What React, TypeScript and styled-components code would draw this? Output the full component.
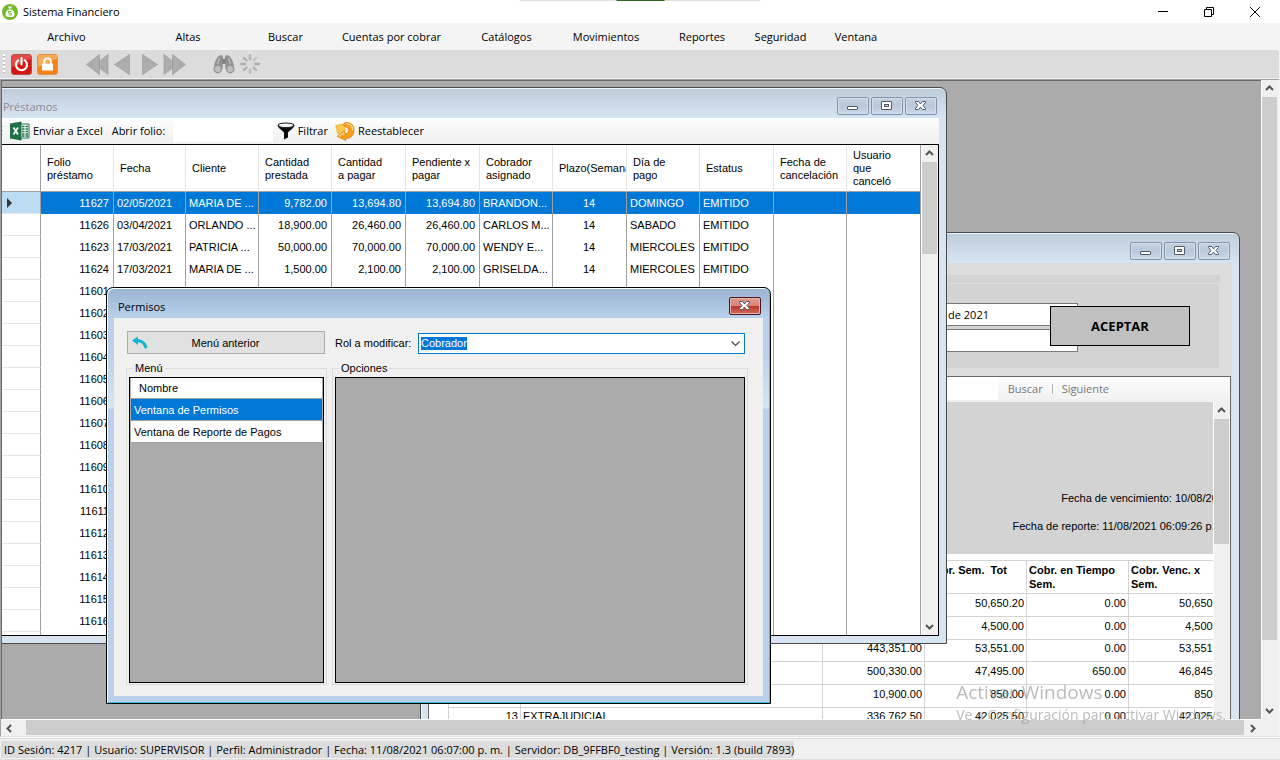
import React, { useEffect, useRef } from "react";
import styled, { createGlobalStyle, css } from "styled-components";

const uiFont = '"Open Sans", "Noto Sans", sans-serif';
const gridFont = '"Liberation Sans", Arial, sans-serif';

const GlobalStyle = createGlobalStyle`
  * { box-sizing: border-box; }
  html, body { margin: 0; padding: 0; }
  body { font: 11px/16px ${uiFont}; color: #000; background: #f0f0f0; }
  button, input { font: inherit; color: inherit; margin: 0; padding: 0; border: 0; background: none; border-radius: 0; outline: none; }
`;

/* ---------- Application frame ---------- */

const Shell = styled.div`
  display: flex;
  flex-direction: column;
  height: 100vh;
  overflow: hidden;
`;

const TitleBar = styled.header`
  position: relative;
  display: flex;
  align-items: center;
  height: 23px;
  flex: none;
  padding: 0 2px;
  background: #fff;
`;

const TopHandle = styled.div`
  position: absolute;
  top: 0;
  left: 50%;
  width: 241px;
  height: 1px;
  transform: translateX(-50%);
  display: flex;
  justify-content: center;
  background: #e1e1e1;
  &::after {
    content: "";
    width: 48px;
    background: #2d6a1e;
  }
`;

const AppTitle = styled.h1`
  flex: 1;
  margin: 0 0 0 5px;
  font-size: 11px;
  font-weight: 400;
`;

const CaptionButton = styled.button`
  width: 46px;
  height: 23px;
  display: flex;
  align-items: center;
  justify-content: center;
`;

const MenuBar = styled.nav`
  display: flex;
  flex: none;
  height: 27px;
  background: #f4f4f4;
`;

const MenuItem = styled.button<{ $w: number }>`
  width: ${(p) => p.$w}px;
  text-align: center;
  white-space: nowrap;
`;

const MainToolbar = styled.div`
  display: flex;
  flex: none;
  align-items: center;
  height: 29px;
  padding-left: 3px;
  background: #dcdcdc;
  border-bottom: 1px solid #f0f0f0;
  border-right: 1px solid #f4f4f4;
  border-radius: 0 3px 0 0;
`;

const Grip = styled.span<{ $h: number }>`
  width: 2px;
  height: ${(p) => p.$h}px;
  flex: none;
  background: repeating-linear-gradient(#fff 0 2px, #bdbdbd 2px 3px, transparent 3px 4px);
`;

const IconButton = styled.button<{ $gap: number }>`
  display: flex;
  flex: none;
  margin-left: ${(p) => p.$gap}px;
`;

const Mdi = styled.main`
  flex: 1;
  min-height: 0;
  display: grid;
  grid-template: minmax(0, 1fr) 17px / minmax(0, 1fr) 17px;
  border-style: solid;
  border-width: 1px 2px 1px 1px;
  border-color: #a0a0a0 #f4f4f4 #e3e3e3 #a0a0a0;
  background: #f0f0f0;
`;

const Desktop = styled.div`
  position: relative;
  overflow: hidden;
  background: #ababab;
  border-top: 1px solid #696969;
  border-left: 1px solid #696969;
`;

const StatusBar = styled.footer`
  flex: none;
  display: flex;
  height: 23px;
  padding: 3px 1px 1px;
  background: #f0f0f0;
  border-top: 1px solid #fff;
  border-bottom: 1px solid #dcdcdc;
  box-shadow: inset 0 1px #d9d9d9;
`;

const StatusText = styled.span`
  padding: 0 0 0 3px;
  line-height: 17px;
  white-space: nowrap;
  background: #dcdcdc;
`;

const Watermark = styled.div`
  position: fixed;
  right: 54px;
  bottom: 35px;
  pointer-events: none;
  color: rgba(150, 150, 150, 0.65);
  font-size: 14px;
  line-height: 20px;
  white-space: nowrap;
  strong {
    display: block;
    font-weight: 400;
    font-size: 19px;
    line-height: 26px;
  }
`;

/* ---------- Scroll bars ---------- */

const Bar = styled.div<{ $row?: boolean }>`
  display: flex;
  flex: none;
  background: #f0f0f0;
  ${(p) =>
    p.$row
      ? css`
          height: 17px;
          border-top: 1px solid #fff;
          border-bottom: 1px solid #f0f0f0;
        `
      : css`
          flex-direction: column;
          width: 17px;
          border-left: 1px solid #fff;
          border-right: 1px solid #f0f0f0;
        `}
`;

const BarArrow = styled.button`
  flex: none;
  width: 17px;
  height: 17px;
  display: flex;
  align-items: center;
  justify-content: center;
  ${Bar} > & {
    max-width: 100%;
  }
`;

const BarThumb = styled.div<{ $flex: string }>`
  flex: ${(p) => p.$flex};
  background: #cdcdcd;
`;

const BarSpace = styled.div<{ $flex: string }>`
  flex: ${(p) => p.$flex};
`;

const arrowPaths = {
  up: "M1 6l3.5-3.5L8 6",
  down: "M1 3l3.5 3.5L8 3",
  left: "M6 1L2.500 4.500 6 8",
  right: "M3 1l3.500 3.500L3 8",
};

function Arrow({ dir }: { dir: keyof typeof arrowPaths }) {
  return (
    <svg width="9" height="9" viewBox="0 0 9 9">
      <path d={arrowPaths[dir]} fill="none" stroke="#555" strokeWidth="2" />
    </svg>
  );
}

interface ScrollProps {
  row?: boolean;
  lead?: string;
  thumb: string;
  tail?: string;
}

function Scroll({ row, lead, thumb, tail }: ScrollProps) {
  return (
    <Bar $row={row}>
      <BarArrow type="button" aria-label="Retroceder"><Arrow dir={row ? "left" : "up"} /></BarArrow>
      {lead && <BarSpace $flex={lead} />}
      <BarThumb $flex={thumb} />
      {tail && <BarSpace $flex={tail} />}
      <BarArrow type="button" aria-label="Avanzar"><Arrow dir={row ? "right" : "down"} /></BarArrow>
    </Bar>
  );
}

/* ---------- Child windows ---------- */

const Window = styled.section<{ $x: number; $y: number; $w: number; $h: number; $active?: boolean }>`
  position: absolute;
  left: ${(p) => p.$x}px;
  top: ${(p) => p.$y}px;
  width: ${(p) => p.$w}px;
  height: ${(p) => p.$h}px;
  display: flex;
  flex-direction: column;
  padding: 0 7px 7px;
  border: 1px solid #4a4a4a;
  border-radius: 7px 7px 0 0;
  background: linear-gradient(#bfcddb, #d7e4f2 30px);
  box-shadow: inset 1px 1px #eef4fa;
  ${(p) =>
    p.$active &&
    css`
      border-color: #000;
      background: linear-gradient(#99b4d1, #b9d1ea 30px, #b9d1ea 66px, #d3e6f5 120px, #b9d1ea 121px);
      box-shadow: inset 1px 1px #fff, inset -1px -1px #35c5e0;
    `}
`;

const Caption = styled.div`
  display: flex;
  flex: none;
  gap: 3px;
  height: 30px;
  padding: 9px 2px 0 2px;
`;

const CaptionText = styled.h2<{ $active?: boolean }>`
  flex: 1;
  margin: 0;
  padding-left: ${(p) => (p.$active ? 2 : 0)}px;
  font-size: 11px;
  line-height: 20px;
  font-weight: 400;
  color: ${(p) => (p.$active ? "#000" : "#8b8d96")};
`;

const ChildButton = styled.button<{ $danger?: boolean }>`
  display: flex;
  align-items: center;
  justify-content: center;
  width: 32px;
  height: 18px;
  border: 1px solid #8493ac;
  border-radius: 2px;
  background: linear-gradient(#c3d0de, #b9c9da 50%, #cbd9e8);
  box-shadow: inset 0 0 0 1px #d3dfeb;
  ${(p) =>
    p.$danger &&
    css`
      border-color: #4a1420;
      background: linear-gradient(#e09a92, #d98378 48%, #b8382a 50%, #cf6a5a);
      box-shadow: inset 0 0 0 1px #eab4ac;
    `}
`;

const ChildButtonGroup = styled.div`
  display: flex;
  gap: 2px;
`;

const WindowBody = styled.div`
  flex: 1;
  min-height: 0;
  display: flex;
  flex-direction: column;
`;

function MinGlyph() {
  return (
    <svg width="12" height="12" viewBox="0 0 12 12">
      <rect x=".5" y="6.500" width="10" height="3" rx=".5" fill="#fff" stroke="#535666" />
    </svg>
  );
}

function MaxGlyph() {
  return (
    <svg width="12" height="10" viewBox="0 0 12 10">
      <rect x=".5" y=".5" width="10" height="8" rx=".5" fill="#fff" stroke="#535666" />
      <rect x="3.500" y="3.500" width="4" height="2" fill="#c3d0de" stroke="#535666" />
    </svg>
  );
}

function CloseGlyph() {
  return (
    <svg width="12" height="10" viewBox="0 0 12 10">
      <path d="M.5.5h3L5.500 3 7.500.5h3v1L8 4.500l2.500 3v1h-3l-2-2.500-2 2.500h-3v-1L3 4.500.5 1.500z" fill="#fff" stroke="#535666" />
    </svg>
  );
}

function ChildButtons() {
  return (
    <ChildButtonGroup>
      <ChildButton type="button" aria-label="Minimizar"><MinGlyph /></ChildButton>
      <ChildButton type="button" aria-label="Maximizar"><MaxGlyph /></ChildButton>
      <ChildButton type="button" aria-label="Cerrar"><CloseGlyph /></ChildButton>
    </ChildButtonGroup>
  );
}

/* ---------- Loans window ---------- */

const Strip = styled.div`
  display: flex;
  flex: none;
  align-items: center;
  height: 26px;
  background: linear-gradient(#fdfdfd, #f0f0f0);
`;

const StripButton = styled.button<{ $gap: number }>`
  display: flex;
  align-items: center;
  gap: 3px;
  margin-left: ${(p) => p.$gap}px;
  white-space: nowrap;
`;

const StripLabel = styled.label`
  width: 61px;
  margin-left: 9px;
  white-space: nowrap;
`;

const FolioInput = styled.input`
  width: 100px;
  height: 22px;
  background: #fff;
`;

const GridFrame = styled.div`
  flex: 1;
  min-height: 0;
  display: flex;
  border: 1px solid #000;
  background: #fff;
  overflow: hidden;
`;

const GridView = styled.div`
  flex: 1;
  min-width: 0;
  overflow: hidden;
`;

const LoanTable = styled.table`
  width: 919px;
  table-layout: fixed;
  border-collapse: separate;
  border-spacing: 0;
  font: 11px/13px ${gridFont};
  th,
  td {
    padding: 1px 4px 0 3px;
    overflow: hidden;
    white-space: nowrap;
    font-weight: 400;
    text-align: left;
    border-right: 1px solid #a0a0a0;
  }
  thead th {
    height: 47px;
    padding: 1px 0 0 6px;
    border-right-color: #e5e5e5;
    border-bottom: 1px solid #a0a0a0;
    &:first-child,
    &:last-child {
      border-right-color: #a0a0a0;
    }
  }
  tbody td,
  tbody th {
    height: 22px;
  }
  tbody th {
    border-bottom: 1px solid #e5e5e5;
    padding-left: 5px;
    svg {
      display: block;
    }
  }
`;

const LoanRow = styled.tr<{ $selected?: boolean }>`
  ${(p) =>
    p.$selected &&
    css`
      td {
        background: #0078d7;
        color: #fff;
      }
      th {
        background: #bcdcf4;
      }
    `}
`;

const Cell = styled.td<{ $align?: string }>`
  && {
    text-align: ${(p) => p.$align ?? "left"};
  }
`;

const loanColumns: { w: number; lines: string[]; align?: string }[] = [
  { w: 73, lines: ["Folio", "préstamo"], align: "right" },
  { w: 72, lines: ["Fecha"] },
  { w: 73, lines: ["Cliente"] },
  { w: 73, lines: ["Cantidad", "prestada"], align: "right" },
  { w: 74, lines: ["Cantidad", "a pagar"], align: "right" },
  { w: 74, lines: ["Pendiente x", "pagar"], align: "right" },
  { w: 73, lines: ["Cobrador", "asignado"] },
  { w: 74, lines: ["Plazo(Semanas)"], align: "center" },
  { w: 73, lines: ["Día de", "pago"] },
  { w: 74, lines: ["Estatus"] },
  { w: 73, lines: ["Fecha de", "cancelación"] },
  { w: 74, lines: ["Usuario", "que", "canceló"] },
];

const loans: string[][] = [
  ["11627", "02/05/2021", "MARIA DE ...", "9,782.00", "13,694.80", "13,694.80", "BRANDON...", "14", "DOMINGO", "EMITIDO"],
  ["11626", "03/04/2021", "ORLANDO ...", "18,900.00", "26,460.00", "26,460.00", "CARLOS M...", "14", "SABADO", "EMITIDO"],
  ["11623", "17/03/2021", "PATRICIA ...", "50,000.00", "70,000.00", "70,000.00", "WENDY E...", "14", "MIERCOLES", "EMITIDO"],
  ["11624", "17/03/2021", "MARIA DE ...", "1,500.00", "2,100.00", "2,100.00", "GRISELDA...", "14", "MIERCOLES", "EMITIDO"],
  ...Array.from({ length: 17 }, (_, i) => [String(11601 + i)]),
];

function ExcelIcon() {
  return (
    <svg width="20" height="20" viewBox="0 0 20 20">
      <path d="M10 3h9v14h-9z" fill="#fff" stroke="#1f7246" />
      <path d="M12 5.500h2.500M12 8h2.500M12 10.500h2.500M12 13h2.500M15.500 5.500H18M15.500 8H18M15.500 10.500H18M15.500 13H18M12 15h2.500M15.500 15H18" stroke="#1f7246" strokeWidth="1.500" />
      <path d="M0 2.500L11.500.5v19L0 17.500z" fill="#1f7246" />
      <path d="M3.500 6.500l4.500 7M8 6.500l-4.500 7" stroke="#fff" strokeWidth="1.700" />
    </svg>
  );
}

function FunnelIcon() {
  return (
    <svg width="18" height="18" viewBox="0 0 18 18">
      <path d="M.5 3C1 7 6.500 8.500 7 11v6.500l4-2V11c.5-2.500 6-4 6.500-8z" fill="#0c0c0c" />
      <ellipse cx="9" cy="3.300" rx="7.700" ry="2.300" fill="#f5f5f5" stroke="#222" strokeWidth="1.100" />
    </svg>
  );
}

function RefreshIcon() {
  return (
    <svg width="20" height="20" viewBox="0 0 20 20">
      <path d="M.8 4.500L8.500 3l2 6.500L8 13l-5.500-.5z" fill="#fbc94e" stroke="#e9a52e" strokeWidth=".7" />
      <path d="M10 1.300l5.500.9C18.300 4 19.500 7 19 10.500c-.5 4.500-4 7.300-8.500 7.200l.3 1.800L2 15.300 9.300 10l.3 2.600c2.400.2 4-1 4-3.300 0-2-1.400-3-3.200-3.300L8.500 3.500z" fill="#f79f1c" stroke="#dd860e" strokeWidth=".8" />
      <path d="M11 2.700l4 .9c2 1.400 2.900 3.500 2.600 6.200M4 15.200l4.500-3.200.3 2.300" fill="none" stroke="#fdd583" strokeWidth="1.300" />
    </svg>
  );
}

function LoansWindow() {
  return (
    <Window $x={-9} $y={6} $w={954} $h={557}>
      <Caption>
        <CaptionText>Préstamos</CaptionText>
        <ChildButtons />
      </Caption>
      <WindowBody>
        <Strip>
          <Grip $h={14} />
          <StripButton type="button" $gap={7}><ExcelIcon />Enviar a Excel</StripButton>
          <StripLabel htmlFor="folio">Abrir folio:</StripLabel>
          <FolioInput id="folio" />
          <StripButton type="button" $gap={4}><FunnelIcon />Filtrar</StripButton>
          <StripButton type="button" $gap={7}><RefreshIcon />Reestablecer</StripButton>
        </Strip>
        <GridFrame>
          <GridView>
            <LoanTable>
              <colgroup>
                <col width={39} />
                {loanColumns.map((c) => <col key={c.lines.join()} width={c.w} />)}
              </colgroup>
              <thead>
                <tr>
                  <th />
                  {loanColumns.map((c) => (
                    <th key={c.lines.join()} scope="col">
                      {c.lines.map((line, i) => (
                        <React.Fragment key={line}>{i > 0 && <br />}{line}</React.Fragment>
                      ))}
                    </th>
                  ))}
                </tr>
              </thead>
              <tbody>
                {loans.map((row, r) => (
                  <LoanRow key={row[0]} $selected={r === 0}>
                    <th>
                      {r === 0 && (
                        <svg width="6" height="10" viewBox="0 0 6 10"><path d="M0 0l5 5-5 5z" fill="#333" /></svg>
                      )}
                    </th>
                    {loanColumns.map((c, i) => (
                      <Cell key={c.lines.join()} $align={c.align}>{row[i]}</Cell>
                    ))}
                  </LoanRow>
                ))}
              </tbody>
            </LoanTable>
          </GridView>
          <Scroll thumb="92" tail="364" />
        </GridFrame>
      </WindowBody>
    </Window>
  );
}

/* ---------- Report window ---------- */

const ReportBody = styled(WindowBody)`
  background: #dcdcdc;
`;

const FilterArea = styled.div`
  flex: none;
  height: 113px;
  padding: 12px 12px 7px;
`;

const FilterGroup = styled.div`
  height: 94px;
  padding-top: 8px;
  background: #d3d3d3;
`;

const FilterFrame = styled.div`
  position: relative;
  height: 86px;
  display: flex;
  flex-direction: column;
  align-items: flex-end;
  gap: 3px;
  padding: 19px 141px 0 0;
  border: 1px solid #dedede;
`;

const FilterInput = styled.input`
  width: 300px;
  height: 23px;
  padding-right: 88px;
  text-align: right;
  background: #fff;
  border: 1px solid #7a7a7a;
`;

const AcceptButton = styled.button`
  position: absolute;
  top: 22px;
  right: 29px;
  width: 140px;
  height: 40px;
  border: 1px solid #000;
  background: #c0c0c0;
  font-size: 13px;
  font-weight: 700;
`;

const Viewer = styled.div`
  flex: 1;
  min-height: 0;
  display: flex;
  flex-direction: column;
  margin-right: 1px;
  border: 1px solid #696969;
  background: #fff;
`;

const ViewerStrip = styled.div`
  display: flex;
  flex: none;
  align-items: center;
  justify-content: flex-end;
  height: 25px;
  padding: 0 121px 2px 0;
  color: #777;
  background: linear-gradient(#fdfdfd, #f0f0f0);
`;

const SearchInput = styled.input`
  width: 160px;
  height: 23px;
  margin-right: 10px;
  background: #fff;
`;

const ViewerButton = styled.button`
  font-size: 11px;
  &:last-child {
    margin-left: 9px;
    padding-left: 10px;
    background: linear-gradient(#b5b5b5, #b5b5b5) 0 50% / 1px 10px no-repeat;
  }
`;

const ViewerPane = styled.div`
  flex: 1;
  min-height: 0;
  display: flex;
`;

const Page = styled.div`
  flex: 1;
  min-width: 0;
  overflow: hidden;
  font: 11px/14px ${gridFont};
`;

const PageHead = styled.div`
  width: 802px;
  height: 152px;
  padding: 89px 1px 0 0;
  text-align: right;
  background: #d3d3d3;
  p {
    margin: 0 0 14px;
  }
`;

const ReportTable = styled.table`
  width: 783px;
  margin: 6px 0 0 19px;
  table-layout: fixed;
  border-collapse: collapse;
  th,
  td {
    height: 23px;
    padding: 2px 2px 0;
    border: 1px solid #d3d3d3;
    vertical-align: top;
    text-align: right;
    white-space: pre;
  }
  th {
    height: 33px;
    text-align: left;
  }
  tbody tr:nth-child(3n) td {
    height: 22px;
    padding-top: 1px;
  }
  td:nth-child(2) {
    text-align: left;
  }
`;

const reportRows: string[][] = [
  ["8", "", "", "50,650.20", "0.00", "50,650.20"],
  ["9", "", "", "4,500.00", "0.00", "4,500.00"],
  ["10", "", "443,351.00", "53,551.00", "0.00", "53,551.00"],
  ["11", "", "500,330.00", "47,495.00", "650.00", "46,845.00"],
  ["12", "", "10,900.00", "850.00", "0.00", "850.00"],
  ["13", "EXTRAJUDICIAL", "336,762.50", "42,025.50", "0.00", "42,025.50"],
];

function ReportWindow() {
  return (
    <Window $x={418} $y={151} $w={820} $h={600}>
      <Caption>
        <CaptionText />
        <ChildButtons />
      </Caption>
      <ReportBody>
        <FilterArea>
          <FilterGroup>
            <FilterFrame>
              <FilterInput aria-label="Fecha" defaultValue="martes, 10 de agosto de 2021" />
              <FilterInput aria-label="Cobrador" />
              <AcceptButton type="button">ACEPTAR</AcceptButton>
            </FilterFrame>
          </FilterGroup>
        </FilterArea>
        <Viewer>
          <ViewerStrip>
            <SearchInput aria-label="Texto" />
            <ViewerButton type="button">Buscar</ViewerButton>
            <ViewerButton type="button">Siguiente</ViewerButton>
          </ViewerStrip>
          <ViewerPane>
            <Page>
              <PageHead>
                <p>Fecha de vencimiento: 10/08/2021</p>
                <p>Fecha de reporte: 11/08/2021 06:09:26 p. m.</p>
              </PageHead>
              <ReportTable>
                <colgroup>
                  <col width={72} />
                  <col width={302} />
                  <col width={102} />
                  <col width={102} />
                  <col width={102} />
                  <col width={102} />
                </colgroup>
                <thead>
                  <tr>
                    <th /><th /><th />
                    <th scope="col">{"Cobr. Sem.  Tot"}</th>
                    <th scope="col">Cobr. en Tiempo<br />Sem.</th>
                    <th scope="col">Cobr. Venc. x<br />Sem.</th>
                  </tr>
                </thead>
                <tbody>
                  {reportRows.map((row) => (
                    <tr key={row[0]}>{row.map((v, i) => <td key={i}>{v}</td>)}</tr>
                  ))}
                </tbody>
              </ReportTable>
            </Page>
            <Scroll thumb="0 0 125px" tail="1" />
          </ViewerPane>
        </Viewer>
      </ReportBody>
    </Window>
  );
}

/* ---------- Permissions dialog ---------- */

const DialogBody = styled(WindowBody)`
  padding: 13px 15px 11px 12px;
  gap: 7px;
  background: #f0f0f0;
  font: 11px/13px ${gridFont};
`;

const DialogRow = styled.div`
  display: flex;
  align-items: flex-end;
  height: 23px;
  padding: 0 3px 0 1px;
`;

const BackButton = styled.button`
  display: flex;
  align-items: center;
  width: 198px;
  height: 23px;
  padding: 0 4px;
  border: 1px solid #adadad;
  background: #e1e1e1;
  span {
    flex: 1;
    padding: 1px 17px 0 0;
    text-align: center;
  }
`;

const RoleLabel = styled.label`
  width: 83px;
  margin-left: 10px;
  padding-top: 1px;
  line-height: 22px;
  white-space: nowrap;
`;

const Combo = styled.div`
  flex: 1;
  display: flex;
  align-items: center;
  height: 21px;
  padding: 0 4px 0 2px;
  border: 1px solid #0078d7;
  background: #fff;
`;

const ComboInput = styled.input`
  flex: 1;
  min-width: 0;
  &::selection {
    color: #fff;
    background: #0078d7;
  }
`;

const Groups = styled.div`
  flex: 1;
  min-height: 0;
  display: flex;
  gap: 5px;
`;

const Group = styled.fieldset<{ $w?: number }>`
  ${(p) => (p.$w ? `flex: none; width: ${p.$w}px;` : "flex: 1; min-width: 0;")}
  display: flex;
  margin: 0;
  padding: 2px 2px 1px;
  border: 1px solid #dcdcdc;
  legend {
    margin-left: 4px;
    padding: 1px 2px 0;
  }
`;

const ListFrame = styled.div`
  flex: 1;
  min-width: 0;
  padding: 0 1px;
  border: 1px solid #000;
  background: #ababab;
`;

const MenuTable = styled.table`
  width: 100%;
  border-spacing: 0;
  th,
  td {
    height: 22px;
    padding: 1px 3px 0;
    font-weight: 400;
    text-align: left;
    background: #fff;
    border-bottom: 1px solid #a0a0a0;
  }
  th {
    height: 21px;
    padding-left: 8px;
  }
`;

const MenuRow = styled.tr<{ $selected?: boolean }>`
  ${(p) => p.$selected && "&& td { background: #0078d7; color: #fff; }"}
`;

function PermissionsDialog() {
  const role = useRef<HTMLInputElement>(null);

  useEffect(() => {
    role.current?.focus();
    role.current?.select();
  }, []);

  return (
    <Window $x={104} $y={206} $w={665} $h={417} $active>
      <Caption>
        <CaptionText $active>Permisos</CaptionText>
        <ChildButton type="button" aria-label="Cerrar" $danger><CloseGlyph /></ChildButton>
      </Caption>
      <DialogBody>
        <DialogRow>
          <BackButton type="button">
            <svg width="16" height="14" viewBox="0 0 16 14">
              <path d="M0 4.500L6 .5V3c5 .5 8.500 4 9.500 8.500L13 13C11.500 8.500 9.500 6.500 6 6.200V9z" fill="#16b4d0" />
            </svg>
            <span>Menú anterior</span>
          </BackButton>
          <RoleLabel htmlFor="rol">Rol a modificar:</RoleLabel>
          <Combo>
            <ComboInput id="rol" role="combobox" aria-expanded={false} ref={role} defaultValue="Cobrador" />
            <button type="button" aria-label="Desplegar">
              <svg width="9" height="6" viewBox="0 0 9 6"><path d="M.5.5l4 4 4-4" fill="none" stroke="#444" strokeWidth="1.200" /></svg>
            </button>
          </Combo>
        </DialogRow>
        <Groups>
          <Group $w={201}>
            <legend>Menú</legend>
            <ListFrame>
              <MenuTable>
                <thead><tr><th scope="col">Nombre</th></tr></thead>
                <tbody>
                  <MenuRow $selected><td>Ventana de Permisos</td></MenuRow>
                  <MenuRow><td>Ventana de Reporte de Pagos</td></MenuRow>
                </tbody>
              </MenuTable>
            </ListFrame>
          </Group>
          <Group>
            <legend>Opciones</legend>
            <ListFrame />
          </Group>
        </Groups>
      </DialogBody>
    </Window>
  );
}

/* ---------- Frame icons ---------- */

function AppIcon() {
  return (
    <svg width="16" height="16" viewBox="0 0 16 16">
      <circle cx="8" cy="8" r="8" fill="#76b82a" />
      <path d="M6 2.500h4L9 5c2 1 3.500 3 3.500 5.500 0 1.500-1 2.500-2.500 2.500H6c-1.500 0-2.500-1-2.500-2.500C3.500 8 5 6 7 5z" fill="#fff" />
      <path d="M9.500 7.500h-3v1.700h3V11h-3M6 5h4" fill="none" stroke="#76b82a" strokeWidth=".9" />
    </svg>
  );
}

function PowerIcon() {
  return (
    <svg width="21" height="21" viewBox="0 0 21 21">
      <rect x=".5" y=".5" width="20" height="20" rx="2.500" fill="#d41513" stroke="#b5514c" />
      <path d="M1 1h19v4C13 6 9 11 1 13z" fill="#ee7a70" opacity=".55" />
      <path d="M7 6.500a5.500 5.500 0 1 0 7 0M10.500 4v6.500" fill="none" stroke="#fff" strokeWidth="2.200" strokeLinecap="round" />
    </svg>
  );
}

function LockIcon() {
  return (
    <svg width="21" height="21" viewBox="0 0 21 21">
      <rect x=".5" y=".5" width="20" height="20" rx="2.500" fill="#f6821a" stroke="#dd9350" />
      <path d="M1 1h19v4C13 6 9 11 1 13z" fill="#fcbb70" opacity=".7" />
      <rect x="5" y="9.500" width="11" height="7" rx="1" fill="#fff" />
      <path d="M7.200 10V7.500a3.300 3.300 0 0 1 6.600 0V10" fill="none" stroke="#fff" strokeWidth="2" />
    </svg>
  );
}

function NavIcon({ double, flip }: { double?: boolean; flip?: boolean }) {
  const w = double ? 23 : 17;
  return (
    <svg width={w} height="21" viewBox={`0 0 ${w} 21`}>
      <g transform={flip ? `translate(${w} 0) scale(-1 1)` : undefined} fill="#adadad" stroke="#9c9c9c" strokeWidth=".7">
        {double ? (
          <>
            <path d="M9 10.500L22 .5v20z" />
            <path d="M.5 10.500L13.500.5v20z" />
          </>
        ) : (
          <path d="M.5 10.500L15.500.5v20z" />
        )}
      </g>
    </svg>
  );
}

function BinocularsIcon() {
  return (
    <svg width="22" height="20" viewBox="0 0 22 20">
      <path d="M5.500 2L9 1l1.300 2.500L9.500 15 1 14C1 9 3 5 5.500 2zM16.500 2L13 1l-1.300 2.500.8 11.500 8.500-1c0-5-2-9-4.500-12z" fill="#909090" />
      <path d="M9 5h4v5H9z" fill="#828282" />
      <path d="M6.500 4L4.500 10M15.500 4l2 6" stroke="#b8b8b8" strokeWidth="1.400" />
      <circle cx="4.800" cy="15" r="3.700" fill="#bdbdbd" stroke="#939393" strokeWidth="1.200" />
      <circle cx="17.200" cy="15" r="3.700" fill="#bdbdbd" stroke="#939393" strokeWidth="1.200" />
    </svg>
  );
}

function SpinnerIcon() {
  return (
    <svg width="22" height="20" viewBox="0 0 22 20">
      <g strokeWidth="2.400" strokeLinecap="round" stroke="#b0b0b0">
        <path d="M11 1.500v4" stroke="#b4b4b4" />
        <path d="M17 4l-2.500 2.500" stroke="#c4c4c4" />
        <path d="M20 10h-4M17 16l-2.500-2.500M5 16l2.500-2.500M2 10h4M5 4l2.500 2.500" />
        <path d="M11 18.500v-3" stroke="#bbb" />
      </g>
    </svg>
  );
}

const menus: [string, number][] = [
  ["Archivo", 133],
  ["Altas", 110],
  ["Buscar", 85],
  ["Cuentas por cobrar", 127],
  ["Catálogos", 103],
  ["Movimientos", 96],
  ["Reportes", 96],
  ["Seguridad", 61],
  ["Ventana", 90],
];

export default function App() {
  return (
    <Shell>
      <GlobalStyle />
      <TitleBar>
        <TopHandle />
        <AppIcon />
        <AppTitle>Sistema Financiero</AppTitle>
        <CaptionButton type="button" aria-label="Minimizar">
          <svg width="10" height="10" viewBox="0 0 10 10"><path d="M0 4.500h10" stroke="#000" /></svg>
        </CaptionButton>
        <CaptionButton type="button" aria-label="Restaurar">
          <svg width="10" height="10" viewBox="0 0 10 10">
            <path d="M.5 2.500h7v7h-7zM2.500 2.500v-2h7v7h-2" fill="none" stroke="#000" />
          </svg>
        </CaptionButton>
        <CaptionButton type="button" aria-label="Cerrar">
          <svg width="10" height="10" viewBox="0 0 10 10"><path d="M0 0l10 10M10 0L0 10" stroke="#000" /></svg>
        </CaptionButton>
      </TitleBar>
      <MenuBar>
        {menus.map(([label, w]) => <MenuItem key={label} type="button" $w={w}>{label}</MenuItem>)}
      </MenuBar>
      <MainToolbar>
        <Grip $h={20} />
        <IconButton type="button" aria-label="Salir" $gap={6}><PowerIcon /></IconButton>
        <IconButton type="button" aria-label="Bloquear" $gap={5}><LockIcon /></IconButton>
        <IconButton type="button" aria-label="Primero" $gap={28}><NavIcon double /></IconButton>
        <IconButton type="button" aria-label="Anterior" $gap={5}><NavIcon /></IconButton>
        <IconButton type="button" aria-label="Siguiente" $gap={10}><NavIcon flip /></IconButton>
        <IconButton type="button" aria-label="Último" $gap={5}><NavIcon double flip /></IconButton>
        <IconButton type="button" aria-label="Buscar" $gap={27}><BinocularsIcon /></IconButton>
        <IconButton type="button" aria-label="Actualizar" $gap={4}><SpinnerIcon /></IconButton>
      </MainToolbar>
      <Mdi>
        <Desktop>
          <ReportWindow />
          <LoansWindow />
          <PermissionsDialog />
        </Desktop>
        <Scroll thumb="543" tail="62" />
        <Scroll row lead="0 0 8px" thumb="1" />
      </Mdi>
      <StatusBar>
        <StatusText>
          ID Sesión: 4217 | Usuario: SUPERVISOR | Perfil: Administrador | Fecha: 11/08/2021 06:07:00 p. m. | Servidor: DB_9FFBF0_testing | Versión: 1.3 (build 7893)
        </StatusText>
      </StatusBar>
      <Watermark>
        <strong>Activar Windows</strong>
        Ve a Configuración para activar Windows.
      </Watermark>
    </Shell>
  );
}
